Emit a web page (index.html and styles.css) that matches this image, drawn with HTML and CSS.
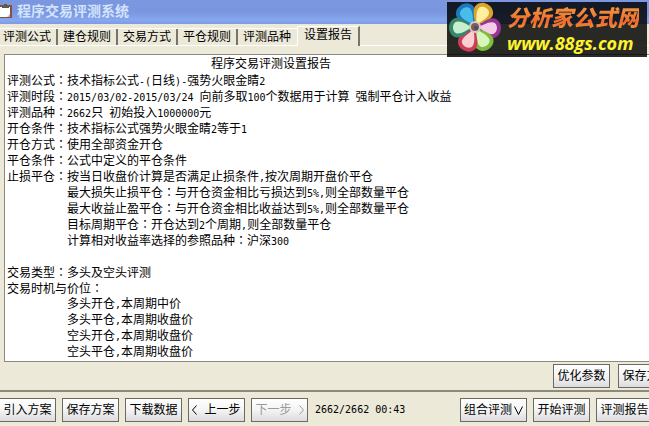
FILE: index.html
```html
<!DOCTYPE html>
<html lang="zh-CN">
<head>
<meta charset="utf-8">
<meta name="viewport" content="width=device-width, initial-scale=1.0">
<title>程序交易评测系统</title>
<link rel="stylesheet" href="styles.css">
</head>
<body>
<header class="titlebar">
  <svg class="titlebar-icon" width="12" height="14" viewBox="0 0 12 14" aria-hidden="true">
    <rect x="0" y="1" width="12" height="13" fill="#8a5138"/>
    <rect x="0" y="3" width="10" height="10" fill="#fff"/>
    <path d="M2 4V2h2V0h3v2h2v2z" fill="#5c5a58"/>
    <path d="M7 13l3-3v3z" fill="#b9b9c4"/>
  </svg>
  <h1>程序交易评测系统</h1>
</header>
<nav class="tabs" role="tablist">
  <button class="tab" role="tab" type="button">评测公式</button>
  <button class="tab" role="tab" type="button">建仓规则</button>
  <button class="tab" role="tab" type="button">交易方式</button>
  <button class="tab" role="tab" type="button">平仓规则</button>
  <button class="tab" role="tab" type="button">评测品种</button>
  <button class="tab active" role="tab" type="button" aria-selected="true">设置报告</button>
</nav>
<main class="panel">
  <section class="report">
    <h2>程序交易评测设置报告</h2>
    <p>评测公式<i>：</i>技术指标公式<b>-(</b>日线<b>)-</b>强势火眼金睛<b>2</b></p>
    <p>评测时段<i>：</i><b>2015/03/02-2015/03/24 </b>向前多取<b>100</b>个数据用于计算<b> </b>强制平仓计入收益</p>
    <p>评测品种<i>：</i><b>2662</b>只<b> </b>初始投入<b>1000000</b>元</p>
    <p>开仓条件<i>：</i>技术指标公式强势火眼金睛<b>2</b>等于<b>1</b></p>
    <p>开仓方式<i>：</i>使用全部资金开仓</p>
    <p>平仓条件<i>：</i>公式中定义的平仓条件</p>
    <p>止损平仓<i>：</i>按当日收盘价计算是否满足止损条件<b>,</b>按次周期开盘价平仓</p>
    <p class="indent">最大损失止损平仓<i>：</i>与开仓资金相比亏损达到<b>5%,</b>则全部数量平仓</p>
    <p class="indent">最大收益止盈平仓<i>：</i>与开仓资金相比收益达到<b>5%,</b>则全部数量平仓</p>
    <p class="indent">目标周期平仓<i>：</i>开仓达到<b>2</b>个周期<b>,</b>则全部数量平仓</p>
    <p class="indent">计算相对收益率选择的参照品种<i>：</i>沪深<b>300</b></p>
    <p class="group">交易类型<i>：</i>多头及空头评测</p>
    <p>交易时机与价位<i>：</i></p>
    <p class="indent">多头开仓<b>,</b>本周期中价</p>
    <p class="indent">多头平仓<b>,</b>本周期收盘价</p>
    <p class="indent">空头开仓<b>,</b>本周期收盘价</p>
    <p class="indent">空头平仓<b>,</b>本周期收盘价</p>
  </section>
  <div class="actions">
    <button class="btn" type="button">优化参数</button>
    <button class="btn" type="button">保存方案</button>
  </div>
</main>
<footer class="toolbar">
  <div class="group-left">
    <button class="btn" type="button">引入方案</button>
    <button class="btn" type="button">保存方案</button>
    <button class="btn" type="button">下载数据</button>
    <button class="btn" type="button"><svg width="5" height="10" viewBox="0 0 5 10" aria-hidden="true"><path d="M4.5 .5L.5 5l4 4.5"/></svg>上一步</button>
    <button class="btn" type="button" disabled>下一步<svg width="5" height="10" viewBox="0 0 5 10" aria-hidden="true"><path d="M.5 .5l4 4.5-4 4.5"/></svg></button>
    <output class="status">2662/2662 00:43</output>
  </div>
  <div class="group-right">
    <button class="btn wide" type="button">组合评测<svg width="9" height="9" viewBox="0 0 9 9" aria-hidden="true"><path d="M.5 .5l4 8 4-8"/></svg></button>
    <button class="btn" type="button">开始评测</button>
    <button class="btn" type="button">评测报告</button>
  </div>
</footer>
<aside class="badge">
  <svg width="54" height="55" viewBox="0 0 54 55" aria-hidden="true">
    <defs>
      <path id="petal" d="M0-2C-4-6-10-12-10-18C-9-24-4-26 0-26C4-26 9-24 10-18C10-12 4-6 0-2z"/>
      <path id="inner" d="M0-3C-2-7-6-12-6-17C-6-21-2-22 0-22C2-22 6-21 6-17C6-12 2-7 0-3z"/>
    </defs>
    <g transform="translate(28 25)">
      <g transform="rotate(-33)"><use href="#petal" fill="#1d79bd"/><use href="#inner" fill="#48bdea"/></g>
      <g transform="rotate(29)"><use href="#petal" fill="#dba32a"/><use href="#inner" fill="#fff0a0"/></g>
      <g transform="rotate(94)"><use href="#petal" fill="#973594"/><use href="#inner" fill="#f5cbe8"/></g>
      <g transform="rotate(149)"><use href="#petal" fill="#7fbd3c"/><use href="#inner" fill="#d8f5bd"/></g>
      <g transform="rotate(205)"><use href="#petal" fill="#cd3c59"/><use href="#inner" fill="#fbd0d3"/></g>
      <g transform="rotate(268)"><use href="#petal" fill="#35886a"/><use href="#inner" fill="#c9edcf"/></g>
      <circle r="6" fill="#d5c9cf"/>
      <circle r="4" fill="#80604d"/>
      <circle cx="1" cy="1" r="2" fill="#41506b"/>
    </g>
  </svg>
  <div class="badge-text">
    <strong>分析家公式网</strong>
    <span>www.88gs.com</span>
  </div>
</aside>
</body>
</html>
```
FILE: styles.css
```css
:root {--face: #ece9d8; --edge: #8c8a7c; --cjk: "Liberation Sans", "Noto Sans CJK SC", sans-serif; --mono: "DejaVu Sans Mono", monospace;}
* {box-sizing: border-box;}
body {margin: 0; min-height: 100vh; display: flex; flex-direction: column; overflow: hidden; background: var(--face); color: #000; font: 12px/16px var(--cjk);}
h1, h2, p {margin: 0; font-size: 12px; font-weight: normal;}
button {font: inherit; color: inherit; margin: 0;}

.titlebar {display: flex; align-items: center; gap: 5px; height: 24px; padding-bottom: 3px; background: linear-gradient(#7b97e0, #7a96df 50%, #86a8ee 85%, #7d9be2);}
.titlebar h1 {font-size: 14px; font-weight: bold; color: #d3e4fb;}

.tabs {display: flex; align-items: flex-end; height: 22px; padding-top: 2px; border-bottom: 1px solid #fff;}
.tab {width: 60px; height: 17px; padding: 0 8px 0 3px; border: 0; background: linear-gradient(#77756a, #77756a) 56px 0 / 2px 100% no-repeat; border-top: 1px solid #fff; line-height: 16px; text-align: left; white-space: nowrap;}
.tab:nth-last-child(2) {background: none;}
.tab.active {width: 63px; height: 20px; margin-bottom: -1px; margin-left: -3px; padding: 0 0 3px 6px; background: var(--face); border-left: 1px solid #fff; border-right: 2px solid #77756a;}

.panel {flex: 1; display: flex; flex-direction: column; padding: 8px 0 0 4px; border-bottom: 2px solid var(--edge);}
.report {flex: 1; padding: 1px 2px; background: #fff; border: 1px solid var(--edge); border-right: 0;}
.report h2 {padding-left: 204px;}
.report p {height: 16px; white-space: pre;}
.report b {font: 10px/1 var(--mono);}
.report i {font-style: normal; font-family: "Noto Sans CJK TC", sans-serif; font-feature-settings: "locl" 0;}
.report .indent {padding-left: 60px;}
.report .group {margin-top: 16px;}
.actions {display: flex; justify-content: flex-end; gap: 8px; margin-right: -26px; padding: 2px 0;}

.btn {display: flex; flex: none; align-items: center; justify-content: center; gap: 7px; width: 57px; height: 24px; padding: 0; border: 1px solid #6b6960; background: linear-gradient(#fff, #f4f4f4 50%, #dcdce0); white-space: nowrap;}
.btn svg {fill: none; stroke: currentColor;}
.btn.wide {width: 67px; gap: 2px;}
.btn:disabled {color: #9b9b9b;}
.toolbar {display: flex; justify-content: space-between; height: 35px; padding-top: 6px;}
.group-left, .group-right {display: flex; gap: 6px;}
.group-left {margin-left: -1px;}
.group-right {margin-right: -4px;}
.status {padding-left: 1px; font: 10px/24px var(--mono); white-space: nowrap;}

.badge {position: absolute; top: 2px; right: 2px; display: flex; align-items: center; width: 200px; height: 55px; background: rgba(0, 0, 0, 0.83);}
.badge-text {display: flex; flex-direction: column; padding-left: 6px; white-space: nowrap;}
.badge strong {font: italic 900 22px/26px var(--cjk); color: transparent; background: linear-gradient(#f59a3c, #ee6a2c 60%, #f2a23f); background-clip: text; -webkit-background-clip: text;}
.badge span {font: italic bold 18px/22px "Open Sans", sans-serif; color: #fdf32f;}
```
